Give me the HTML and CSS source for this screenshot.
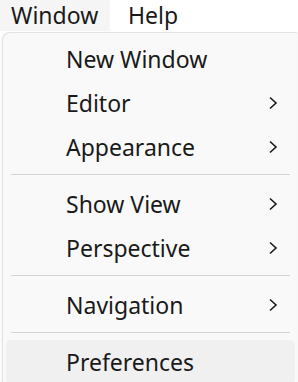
FILE: index.html
```html
<!DOCTYPE html>
<html lang="en">
<head>
    <meta charset="UTF-8">
    <meta name="viewport" content="width=device-width, initial-scale=1.0">
    <title>Window menu</title>
    <link rel="stylesheet" href="styles.css">
</head>
<body>

<div class="menubar">
    <span class="menubar-item abierto">Window</span>
    <span class="menubar-item">Help</span>
</div>

<div class="menu">
    <div class="menu-item">New Window</div>
    <div class="menu-item">Editor <svg class="flecha" viewBox="0 0 10 14"><polyline points="2,1.5 8,7 2,12.5"/></svg></div>
    <div class="menu-item">Appearance <svg class="flecha" viewBox="0 0 10 14"><polyline points="2,1.5 8,7 2,12.5"/></svg></div>
    <div class="separador"></div>
    <div class="menu-item">Show View <svg class="flecha" viewBox="0 0 10 14"><polyline points="2,1.5 8,7 2,12.5"/></svg></div>
    <div class="menu-item">Perspective <svg class="flecha" viewBox="0 0 10 14"><polyline points="2,1.5 8,7 2,12.5"/></svg></div>
    <div class="separador"></div>
    <div class="menu-item">Navigation <svg class="flecha" viewBox="0 0 10 14"><polyline points="2,1.5 8,7 2,12.5"/></svg></div>
    <div class="separador"></div>
    <div class="menu-item activo">Preferences</div>
</div>

</body>
</html>
```

FILE: styles.css
```css
body {
    font-family: "Noto Sans", "Open Sans", sans-serif;
    font-size: 23px;
    color: #1a1a1a;
    margin: 0;
    background: white;
    overflow: hidden;
}

.menubar {
    display: flex;
    gap: 7px;
    height: 32px;
}

.menubar-item {
    line-height: 31px;
    height: 31px;
    padding: 0 10px 0 11px;
}

.menubar-item.abierto {
    background-color: #f5f5f5;
    width: 89px;
}

.menu {
    margin-left: 2px;
    width: 294px;
    background-color: #f9f9f9;
    border: 1px solid #e3e3e3;
    border-right: none;
    border-radius: 8px 0 0 8px;
    padding: 4px 0 10px 0;
    box-shadow: 0 1px 3px rgba(0,0,0,0.08);
}

.menu-item {
    display: flex;
    align-items: center;
    justify-content: space-between;
    height: 44px;
    margin: 0 2px 0 3px;
    padding: 0 17px 0 60px;
    border-radius: 5px;
}

.menu-item.activo {
    background-color: #f0f0f0;
}

.flecha {
    flex-shrink: 0;
    width: 10px;
    height: 14px;
    fill: none;
    stroke: #1a1a1a;
    stroke-width: 1.6;
}

.separador {
    height: 1px;
    background-color: #d4d4d4;
    margin: 5px 7px 7px 8px;
}
```
